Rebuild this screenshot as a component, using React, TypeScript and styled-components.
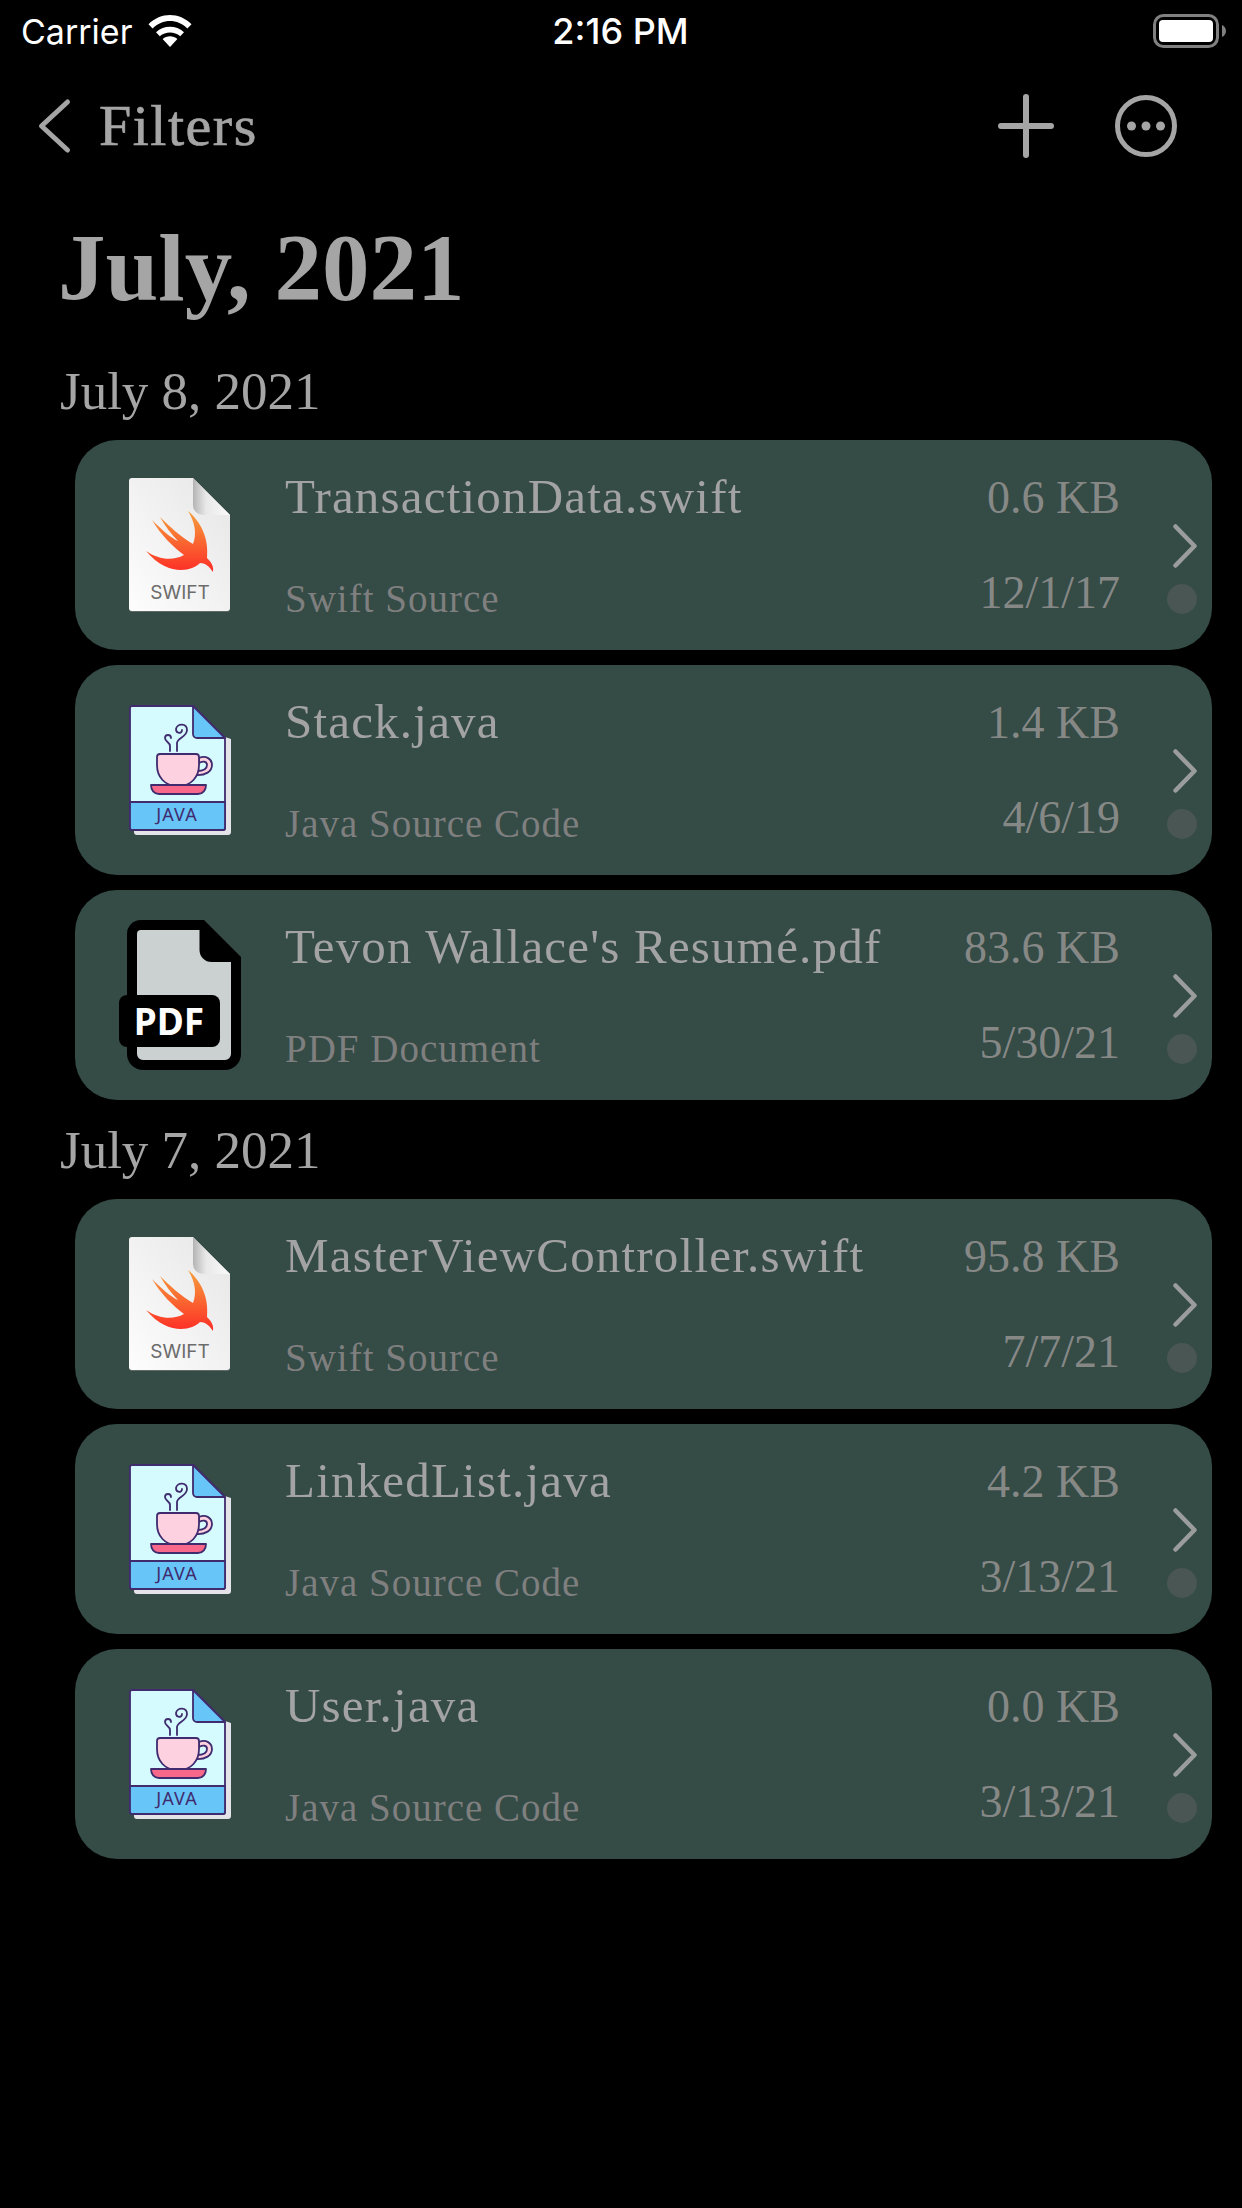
import React from "react";
import styled, { createGlobalStyle } from "styled-components";

const Global = createGlobalStyle`
  html, body { margin: 0; padding: 0; background: #000; }
  body { width: 1242px; height: 2208px; overflow: hidden; }
`;

const serif = `"Liberation Serif", serif`;

const Screen = styled.div`
  width: 1242px;
  height: 2208px;
  background: #000;
  display: flex;
  flex-direction: column;
  font-family: ${serif};
`;

const StatusBar = styled.div`
  height: 62px;
  display: grid;
  grid-template-columns: 1fr auto 1fr;
  align-items: center;
  padding: 0 16px 0 21px;
  color: #fff;
  font-family: Inter, "Liberation Sans", sans-serif;
  font-size: 34px;
`;

const StatusLeft = styled.div`
  display: flex;
  align-items: center;
  gap: 16px;
`;

const Clock = styled.span`
  font-size: 36px;
  font-weight: 500;
  margin-right: 6px;
`;

const StatusRight = styled.div`
  display: flex;
  justify-content: flex-end;
`;

const NavBar = styled.div`
  height: 128px;
  display: flex;
  align-items: center;
  padding: 0 65px 0 36px;
`;

const BackLabel = styled.span`
  font-size: 58px;
  line-height: 64px;
  margin-left: 27px;
  flex: 1;
  color: #a5a5a5;
  letter-spacing: 1.5px;
  -webkit-text-stroke: 0.7px #a5a5a5;
`;

const NavActions = styled.div`
  display: flex;
  align-items: center;
  gap: 61px;
`;

const Title = styled.h1`
  margin: 0 0 21px;
  padding: 26px 0 0 58px;
  font-size: 95px;
  line-height: 104px;
  font-weight: 700;
  color: #a5a5a5;
`;

const SectionTitle = styled.h2`
  margin: 20px 0 0;
  padding-left: 60px;
  font-size: 53px;
  line-height: 60px;
  font-weight: 400;
  color: #a5a5a5;
`;

const List = styled.div`
  display: flex;
  flex-direction: column;
  gap: 15px;
  margin: 19px 30px 0 75px;
`;

const Card = styled.div`
  height: 210px;
  border-radius: 42px;
  background: #344b46;
  display: flex;
  align-items: stretch;
`;

const IconSlot = styled.div`
  width: 210px;
  flex: none;
  display: flex;
  align-items: center;
  justify-content: center;
`;

const Texts = styled.div`
  flex: 1;
  display: flex;
  flex-direction: column;
  justify-content: space-between;
  padding: 30px 0 28px;
`;

const TopRow = styled.div`
  display: flex;
  justify-content: space-between;
  align-items: baseline;
`;

const BottomRow = styled.div`
  display: flex;
  justify-content: space-between;
  align-items: flex-end;
`;

const Name = styled.span`
  font-size: 49px;
  line-height: 54px;
  letter-spacing: 1.2px;
  color: #a3a3a3;
`;

const Size = styled.span`
  font-size: 46px;
  line-height: 54px;
  color: #868886;
`;

const Kind = styled.span`
  font-size: 39px;
  line-height: 46px;
  letter-spacing: 1px;
  color: #7e7f7e;
`;

const DateText = styled.span`
  font-size: 46px;
  line-height: 46px;
  margin-bottom: 6px;
  color: #868886;
`;

const Side = styled.div`
  width: 92px;
  flex: none;
  display: flex;
  flex-direction: column;
  align-items: flex-end;
  padding: 84px 15px 0 0;
  box-sizing: border-box;
  gap: 16px;
`;

const Dot = styled.div`
  width: 30px;
  height: 30px;
  border-radius: 50%;
  background: #4a5653;
`;

const Wifi = () => (
  <svg width="44" height="34" viewBox="0 0 44 34">
    <path d="M22 33 L14.6 25 C18.8 21.4 25.2 21.4 29.4 25 Z" fill="#fff" />
    <path d="M8 18.2 C16 11 28 11 36 18.2 L32.2 22.2 C26.4 17.4 17.6 17.4 11.8 22.2 Z" fill="#fff" />
    <path d="M0.5 10.2 C12.5 -2.2 31.5 -2.2 43.5 10.2 L39.4 14.6 C29.8 4.6 14.2 4.6 4.6 14.6 Z" fill="#fff" />
  </svg>
);

const Battery = () => (
  <svg width="73" height="34" viewBox="0 0 73 34">
    <rect x="1.5" y="1.5" width="63" height="31" rx="9" fill="none" stroke="#808080" strokeWidth="3" />
    <rect x="6" y="6" width="54" height="22" rx="4" fill="#fff" />
    <path d="M69 11 C71.5 12 73 14.5 73 17 C73 19.5 71.5 22 69 23 Z" fill="#808080" />
  </svg>
);

const BackChevron = () => (
  <svg width="36" height="56" viewBox="0 0 36 56">
    <path d="M31.5 4 L5.5 28 L31.5 52" fill="none" stroke="#a5a5a5" strokeWidth="5" strokeLinecap="round" strokeLinejoin="round" />
  </svg>
);

const Plus = () => (
  <svg width="56" height="64" viewBox="0 0 56 64">
    <path d="M28 3 V61 M3 32 H53" fill="none" stroke="#a5a5a5" strokeWidth="6" strokeLinecap="round" />
  </svg>
);

const More = () => (
  <svg width="62" height="64" viewBox="0 0 62 64">
    <circle cx="31" cy="32" r="28.5" fill="none" stroke="#a5a5a5" strokeWidth="5" />
    <circle cx="16.5" cy="32" r="4.5" fill="#a5a5a5" />
    <circle cx="31" cy="32" r="4.5" fill="#a5a5a5" />
    <circle cx="45.5" cy="32" r="4.5" fill="#a5a5a5" />
  </svg>
);

const Chevron = () => (
  <svg width="24" height="44" viewBox="0 0 24 44">
    <path d="M2.5 2.5 L21.5 22 L2.5 41.5" fill="none" stroke="#9b9c9c" strokeWidth="4.5" strokeLinecap="round" strokeLinejoin="round" />
  </svg>
);

const SwiftIcon = () => (
  <svg width="102" height="135" viewBox="0 0 102 135">
    <defs>
      <linearGradient id="paper" x1="0" y1="1" x2="1" y2="0">
        <stop offset="0" stopColor="#fdfdfd" />
        <stop offset="1" stopColor="#e6e6e6" />
      </linearGradient>
      <linearGradient id="fold" x1="0" y1="0" x2="1" y2="0">
        <stop offset="0" stopColor="#b4b4b4" />
        <stop offset="0.35" stopColor="#e8e8e8" />
        <stop offset="1" stopColor="#fafafa" />
      </linearGradient>
      <linearGradient id="bird" x1="0" y1="0" x2="0" y2="1">
        <stop offset="0" stopColor="#f6a03c" />
        <stop offset="1" stopColor="#fd2e26" />
      </linearGradient>
    </defs>
    <path d="M3 1 H64 L101 38 V131 A3 3 0 0 1 98 134 H3 A3 3 0 0 1 0 131 V4 A3 3 0 0 1 3 1 Z" fill="#5f6a67" />
    <path d="M3 0 H64 L101 37 V130 A3 3 0 0 1 98 133 H3 A3 3 0 0 1 0 130 V3 A3 3 0 0 1 3 0 Z" fill="url(#paper)" />
    <path d="M64 0 L101 37 H74 A10 10 0 0 1 64 27 Z" fill="url(#fold)" />
    <path d="M59 33 C72 44 80 60 78 80 C82 84 85 88 84 94 C80 88 76 85 71 85 C62 94 38 98 17 73 C30 82 44 83 55 77 C44 69 32 57 23 42 C33 52 42 60 49 63 C42 56 36 48 31 39 C41 49 52 59 64 66 C68 56 66 44 59 33 Z" fill="url(#bird)" />
    <text x="51" y="121" textAnchor="middle" fontFamily="Inter, Liberation Sans, sans-serif" fontSize="19" fill="#6c6c6c">SWIFT</text>
  </svg>
);

const JavaIcon = () => (
  <svg width="102" height="130" viewBox="0 0 102 130">
    <path d="M90 30 L102 34 V127 A3 3 0 0 1 99 130 H8 A3 3 0 0 1 5 127 V120 Z" fill="#e4e4e8" />
    <path d="M1 3 A2 2 0 0 1 3 1 H64 L96 33 V123 A2 2 0 0 1 94 125 H3 A2 2 0 0 1 1 123 Z" fill="#d5fbff" stroke="#3f2b6e" strokeWidth="1.8" />
    <path d="M64 1 L96 33 H68 A4 4 0 0 1 64 29 Z" fill="#68c5f8" stroke="#3f2b6e" strokeWidth="1.8" strokeLinejoin="round" />
    <path d="M1 97 H96 V123 A2 2 0 0 1 94 125 H3 A2 2 0 0 1 1 123 Z" fill="#68c5f8" stroke="#3f2b6e" strokeWidth="1.8" />
    <text x="48" y="116" textAnchor="middle" fontFamily="Noto Sans, sans-serif" fontSize="18" letterSpacing="1" fill="#3f2b6e">JAVA</text>
    <path d="M41 46 V41 C41 37 36 37 36 33 C36 29 42 29 42 33" fill="none" stroke="#3f2b6e" strokeWidth="1.8" strokeLinecap="round" />
    <path d="M48 46 V38 C48 33 58 32 58 25 C58 18 48 18 47 24 C47 29 53 29 53 25" fill="none" stroke="#3f2b6e" strokeWidth="1.8" strokeLinecap="round" />
    <path d="M70 53 C77 50 83 54 83 60 C83 66 77 71 66 70 L68 66 C74 66 78 64 78 60 C78 56 74 56 70 58 Z" fill="#fdd1df" stroke="#3f2b6e" strokeWidth="1.8" strokeLinejoin="round" />
    <path d="M31 49 H67 A3 3 0 0 1 70 52 V60 C70 72 62 81 50 81 H48 C36 81 28 72 28 60 V52 A3 3 0 0 1 31 49 Z" fill="#fdd1df" stroke="#3f2b6e" strokeWidth="1.8" />
    <path d="M22 80 H77 C77 85 74 89 69 89 H30 C25 89 22 85 22 80 Z" fill="#f7688a" stroke="#3f2b6e" strokeWidth="1.8" strokeLinejoin="round" />
  </svg>
);

const PdfIcon = () => (
  <svg width="122" height="150" viewBox="0 0 122 150">
    <path d="M22 0 H85 L122 37 V134 A16 16 0 0 1 106 150 H24 A16 16 0 0 1 8 134 V14 A14 14 0 0 1 22 0 Z" fill="#000" />
    <path d="M22 10 H80.5 V30 A12 12 0 0 0 92.5 42 H112 V134 A6 6 0 0 1 106 140 H24 A6 6 0 0 1 18 134 V14 A4 4 0 0 1 22 10 Z" fill="#cbd0d1" />
    <rect x="0" y="75" width="101" height="52" rx="8" fill="#000" />
    <text x="50" y="115" textAnchor="middle" fontFamily="Noto Sans, sans-serif" fontWeight="700" fontSize="37" fill="#fff">PDF</text>
  </svg>
);

type Kinds = "swift" | "java" | "pdf";

const kindLabel: Record<Kinds, string> = {
  swift: "Swift Source",
  java: "Java Source Code",
  pdf: "PDF Document",
};

const kindIcon: Record<Kinds, React.ReactNode> = {
  swift: <SwiftIcon />,
  java: <JavaIcon />,
  pdf: <PdfIcon />,
};

const FileCard = ({ kind, name, size, date }: { kind: Kinds; name: string; size: string; date: string }) => (
  <Card>
    <IconSlot>{kindIcon[kind]}</IconSlot>
    <Texts>
      <TopRow>
        <Name>{name}</Name>
        <Size>{size}</Size>
      </TopRow>
      <BottomRow>
        <Kind>{kindLabel[kind]}</Kind>
        <DateText>{date}</DateText>
      </BottomRow>
    </Texts>
    <Side>
      <Chevron />
      <Dot />
    </Side>
  </Card>
);

export default function App() {
  return (
    <Screen>
      <Global />
      <StatusBar>
        <StatusLeft>
          Carrier
          <Wifi />
        </StatusLeft>
        <Clock>2:16 PM</Clock>
        <StatusRight>
          <Battery />
        </StatusRight>
      </StatusBar>
      <NavBar>
        <BackChevron />
        <BackLabel>Filters</BackLabel>
        <NavActions>
          <Plus />
          <More />
        </NavActions>
      </NavBar>
      <Title>July, 2021</Title>
      <SectionTitle>July 8, 2021</SectionTitle>
      <List>
        <FileCard kind="swift" name="TransactionData.swift" size="0.6 KB" date="12/1/17" />
        <FileCard kind="java" name="Stack.java" size="1.4 KB" date="4/6/19" />
        <FileCard kind="pdf" name="Tevon Wallace's Resumé.pdf" size="83.6 KB" date="5/30/21" />
      </List>
      <SectionTitle>July 7, 2021</SectionTitle>
      <List>
        <FileCard kind="swift" name="MasterViewController.swift" size="95.8 KB" date="7/7/21" />
        <FileCard kind="java" name="LinkedList.java" size="4.2 KB" date="3/13/21" />
        <FileCard kind="java" name="User.java" size="0.0 KB" date="3/13/21" />
      </List>
    </Screen>
  );
}
